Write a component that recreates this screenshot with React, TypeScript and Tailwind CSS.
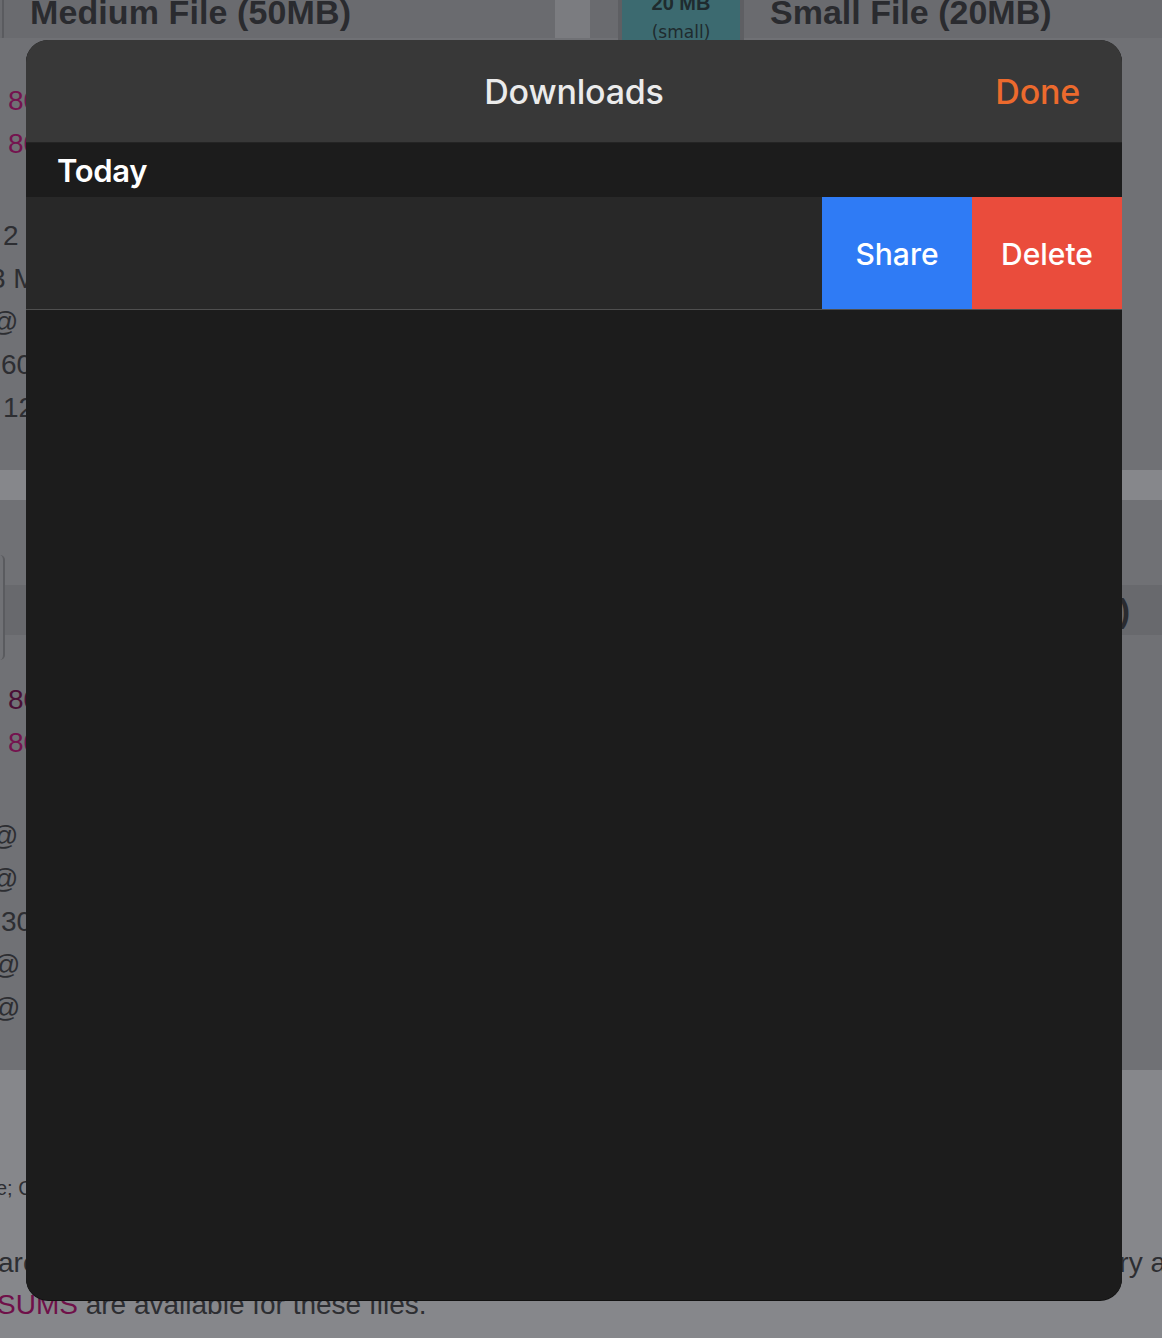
import React from 'react';

const sans = { fontFamily: 'Inter, "Noto Sans", sans-serif' };

// Dimmed web page sitting behind the sheet
const PageBehind: React.FC = () => {
  return (
    <div className="flex flex-col w-full h-full font-['Liberation_Sans',Arial,sans-serif] text-[28px] text-[#2d2e32]">
      {/* first card row */}
      <div className="flex flex-col h-[470px] bg-[#707175]">
        <div className="flex h-[38px] shrink-0">
          <div className="flex w-[555px] bg-[#6a6b6f] overflow-hidden">
            <div className="w-[4px] h-[60px] -mt-[20px] border-r-[2px] border-[#5a5b5f] rounded-br-md shrink-0" />
            <h2 className="ml-[26px] -mt-[5px] text-[34px] font-bold leading-none text-[#2a2b2f] whitespace-nowrap tracking-[0.1px]">Medium File (50MB)</h2>
          </div>
          <div className="w-[35px] bg-[#7b7c80]" />
          <div className="flex flex-1 bg-[#6a6b6f]">
            <div className="ml-[28px] w-[126px] h-[40px] border-x-[4px] border-[#5e5f63] bg-[#3c6a70] flex flex-col items-center justify-end shrink-0 overflow-hidden">
              <span className="text-[20px] leading-none font-bold text-[#1f2b2e] mb-[8px]">20 MB</span>
              <span className="text-[17px] leading-[22px] -mb-[3px] text-[#1f2b2e] font-['DejaVu_Sans',sans-serif]">(small)</span>
            </div>
            <h2 className="ml-[26px] -mt-[5px] text-[34px] font-bold leading-none text-[#2a2b2f] whitespace-nowrap">Small File (20MB)</h2>
          </div>
        </div>
        <div className="flex flex-col pt-[41px] leading-[43px]">
          <span className="pl-[8px] text-[#74134f]">8080</span>
          <span className="pl-[8px] text-[#74134f]">8081</span>
          <div className="h-[49px]" />
          <span className="pl-[3px]">2</span>
          <span className="-ml-[10px]">3 MB</span>
          <span className="-ml-[10px]">@ 3</span>
          <span className="pl-[1px]">60</span>
          <span className="pl-[3px]">12</span>
        </div>
      </div>

      <div className="h-[30px] bg-[#86878b]" />

      {/* second card row */}
      <div className="flex flex-col h-[570px] bg-[#707175]">
        <div className="flex h-[160px]">
          <div className="mt-[55px] w-[5px] h-[105px] border-r-[2px] border-[#5a5b5f] rounded-r-md shrink-0" />
          <div className="flex flex-col flex-1">
            <div className="h-[85px]" />
            <div className="flex h-[50px] bg-[#68696d] justify-end">
              <span className="mr-[32px] text-[34px] font-bold leading-[50px] text-[#2a2b2f]">)</span>
            </div>
          </div>
        </div>
        <div className="flex flex-col pt-[18px] leading-[43px]">
          <span className="pl-[8px] text-[#4a0f36]">8080</span>
          <span className="pl-[8px] text-[#74134f]">8081</span>
          <div className="h-[50px]" />
          <span className="-ml-[10px]">@ 2</span>
          <span className="-ml-[10px]">@ 8</span>
          <span className="pl-[1px]">30</span>
          <span className="-ml-[8px]">@</span>
          <span className="-ml-[8px]">@</span>
        </div>
      </div>

      {/* footer text */}
      <div className="flex flex-col flex-1 bg-[#86878b]">
        <div className="h-[104px]" />
        <span className="-ml-[4px] text-[20px] leading-[28px]">e; C</span>
        <div className="flex justify-between mt-[39px] leading-[43px]">
          <span className="-ml-[2px]">are</span>
          <span className="-mr-[4px]">ry a</span>
        </div>
        <span className="-ml-[3px] -mt-[1px] leading-[43px]">
          <span className="text-[#6f1049]">SUMS</span> are available for these files.
        </span>
      </div>
    </div>
  );
};

const DownloadsSheet: React.FC = () => {
  return (
    <div
      className="absolute left-[26px] top-[40px] w-[1096px] h-[1260px] rounded-[22px] overflow-hidden bg-[#1c1c1c] flex flex-col shadow-[0_1px_0_#111]"
      style={sans}
    >
      <div className="relative h-[103px] bg-[#383838] border-b border-[#242424] flex items-center justify-center shrink-0">
        <h1 className="text-[34px] font-medium text-[#ebebeb] tracking-[-0.2px]">Downloads</h1>
        <button className="absolute right-[42px] top-1/2 -translate-y-1/2 text-[34px] font-medium text-[#ec6a2d] tracking-[-0.2px]">
          Done
        </button>
      </div>

      <div className="h-[54px] flex items-center pl-[31px] pt-[2px] bg-[#1c1c1c] shrink-0">
        <span className="text-[31px] font-semibold text-white tracking-[-0.3px]">Today</span>
      </div>

      <div className="flex h-[113px] bg-[#282828] border-b border-[#4f4f4f] shrink-0">
        <div className="flex-1" />
        <button className="w-[150px] bg-[#2f7bf5] text-white text-[30px] font-medium pt-[2px]">Share</button>
        <button className="w-[150px] bg-[#ea4c3c] text-white text-[30px] font-medium pt-[2px]">Delete</button>
      </div>

      <div className="flex-1 bg-[#1c1c1c]" />
    </div>
  );
};

export default function App() {
  return (
    <div className="relative w-[1162px] h-[1338px] overflow-hidden bg-[#707175]">
      <PageBehind />
      <DownloadsSheet />
    </div>
  );
}
